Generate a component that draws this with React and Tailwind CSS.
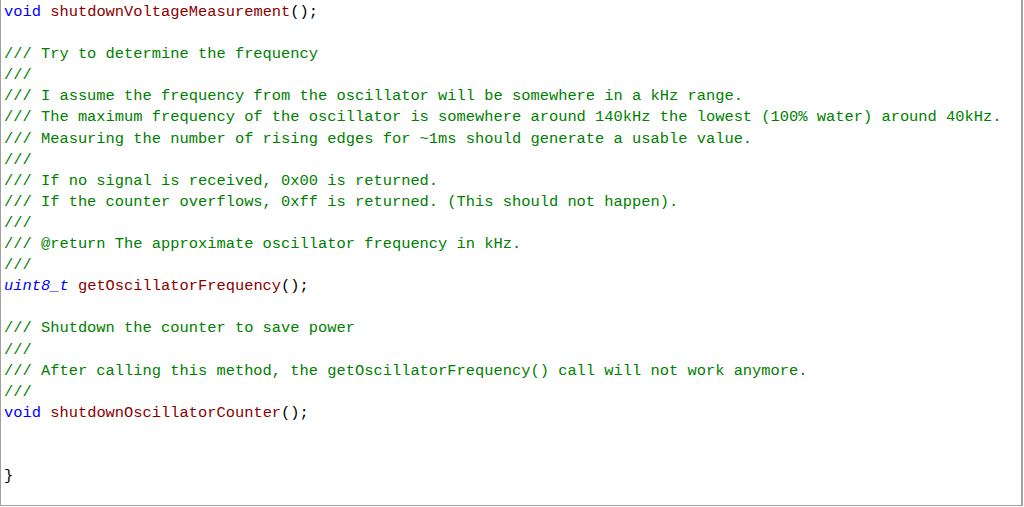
import React from "react";

const lines = [
  [["k", "void"], ["t", " "], ["f", "shutdownVoltageMeasurement"], ["t", "();"]],
  [],
  [["c", "/// Try to determine the frequency"]],
  [["c", "///"]],
  [["c", "/// I assume the frequency from the oscillator will be somewhere in a kHz range."]],
  [["c", "/// The maximum frequency of the oscillator is somewhere around 140kHz the lowest (100% water) around 40kHz."]],
  [["c", "/// Measuring the number of rising edges for ~1ms should generate a usable value."]],
  [["c", "///"]],
  [["c", "/// If no signal is received, 0x00 is returned."]],
  [["c", "/// If the counter overflows, 0xff is returned. (This should not happen)."]],
  [["c", "///"]],
  [["c", "/// @return The approximate oscillator frequency in kHz."]],
  [["c", "///"]],
  [["i", "uint8_t"], ["t", " "], ["f", "getOscillatorFrequency"], ["t", "();"]],
  [],
  [["c", "/// Shutdown the counter to save power"]],
  [["c", "///"]],
  [["c", "/// After calling this method, the getOscillatorFrequency() call will not work anymore."]],
  [["c", "///"]],
  [["k", "void"], ["t", " "], ["f", "shutdownOscillatorCounter"], ["t", "();"]],
  [],
  [],
  [["t", "}"]],
];

const tone = {
  k: "text-[#0000ff]",
  i: "text-[#0000ff] italic",
  f: "text-[#8b0000]",
  c: "text-[#008000]",
  t: "text-[#000000]",
};

export default function App() {
  return (
    <div className="w-[1024px] h-[507px] bg-white overflow-hidden">
      <div className="w-[1023px] h-[506px] border-l border-r-2 border-b border-[#a0a0a0] pl-[3px] pt-[2px] font-['Liberation_Mono',monospace] text-[15.4px] leading-[21.1px] whitespace-pre">
        {lines.map((parts, i) => (
          <div key={i} className="h-[21.1px]">
            {parts.map(([k, s], j) => (
              <span key={j} className={tone[k]}>
                {s}
              </span>
            ))}
          </div>
        ))}
      </div>
    </div>
  );
}
